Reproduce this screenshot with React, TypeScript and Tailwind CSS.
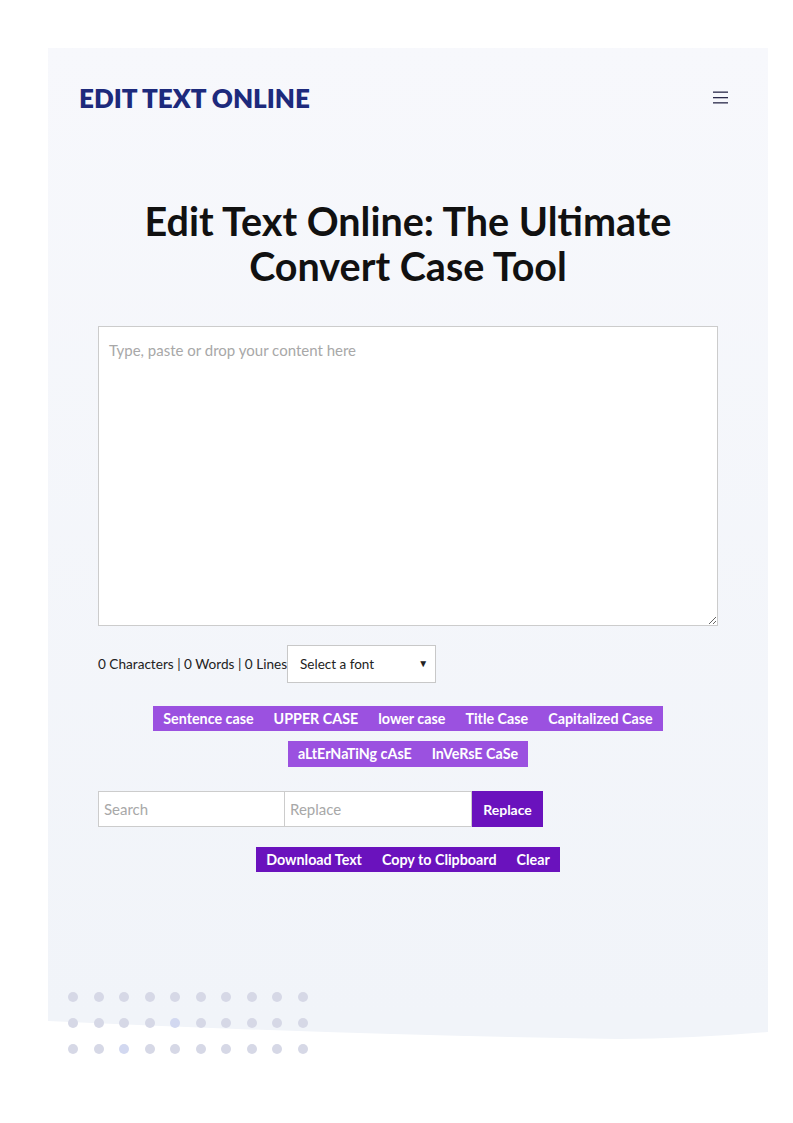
import React from "react";

const font = { fontFamily: "Lato, 'Noto Sans', sans-serif" };

export default function App() {
  const caseRow1 = ["Sentence case", "UPPER CASE", "lower case", "Title Case", "Capitalized Case"];
  const caseRow2 = ["aLtErNaTiNg cAsE", "InVeRsE CaSe"];
  const dots = Array.from({ length: 30 });
  return (
    <div className="relative min-h-[1123px] bg-white pt-[48px]" style={font}>
      <div className="ml-[48px] w-[720px]">
        <div className="bg-gradient-to-b from-[#f7f8fc] to-[#f1f4f9] pb-[149px]">
          <header className="flex h-[100px] items-center justify-between pl-[31px] pr-[40px]">
            <div className="text-[26px] font-extrabold text-[#1d2a7c]">EDIT TEXT ONLINE</div>
            <svg width="15" height="13" viewBox="0 0 15 13" className="mt-[-2px]">
              <rect x="0" y="0.5" width="15" height="1.3" fill="#2a2a4a" />
              <rect x="0" y="6" width="15" height="1.3" fill="#2a2a4a" />
              <rect x="0" y="11.2" width="15" height="1.3" fill="#2a2a4a" />
            </svg>
          </header>
          <h1 className="mt-[50px] text-center text-[39.5px] font-bold leading-[45px] text-[#111]">
            Edit Text Online: The Ultimate
            <br />
            Convert Case Tool
          </h1>
          <div className="mx-[50px] mt-[38px]">
            <textarea
              placeholder="Type, paste or drop your content here"
              className="block h-[300px] w-full resize-y border border-[#cccccc] bg-white px-[10px] py-[12px] text-[15px] text-[#333] placeholder:text-[#a8a8a8] outline-none"
            />
            <div className="mt-[19px] flex items-center">
              <span className="text-[13.6px] text-[#222]">0 Characters | 0 Words | 0 Lines</span>
              <div className="relative flex h-[38px] w-[149px] items-center border border-[#c8c8c8] bg-white pl-[12px] text-[13.5px] text-[#222]">
                Select a font
                <span className="absolute right-[7px] top-[10px] text-[10px]">▼</span>
              </div>
            </div>
            <div className="mt-[23px] flex flex-col items-center gap-[10px]">
              <div className="flex bg-[#9b51e0]">
                {caseRow1.map((t) => (
                  <span key={t} className="px-[10px] text-[14.3px] font-bold leading-[25px] text-white">{t}</span>
                ))}
              </div>
              <div className="flex bg-[#9b51e0]">
                {caseRow2.map((t) => (
                  <span key={t} className="px-[10px] text-[14.3px] font-bold leading-[26px] text-white">{t}</span>
                ))}
              </div>
            </div>
            <div className="mt-[24px] flex">
              <input placeholder="Search" className="h-[36px] w-[187px] border border-[#cccccc] bg-white px-[5px] text-[15px] placeholder:text-[#a8a8a8] outline-none" />
              <input placeholder="Replace" className="h-[36px] w-[187px] border border-l-0 border-[#cccccc] bg-white px-[5px] text-[15px] placeholder:text-[#a8a8a8] outline-none" />
              <button className="h-[36px] w-[71px] bg-[#6a12bd] text-[14px] font-bold text-white">Replace</button>
            </div>
            <div className="mt-[20px] flex justify-center">
              <div className="flex bg-[#6a12bd]">
                {["Download Text", "Copy to Clipboard", "Clear"].map((t) => (
                  <span key={t} className="px-[10px] text-[14.3px] font-bold leading-[25px] text-white">{t}</span>
                ))}
              </div>
            </div>
          </div>
        </div>
        <svg width="720" height="20" viewBox="0 0 720 20" preserveAspectRatio="none" className="block">
          <path d="M0 0 H720 V11 Q640 18 570 18 Q300 14 0 0 Z" fill="#f1f4f9" />
        </svg>
      </div>
      <div className="absolute left-[68px] top-[992px] grid grid-cols-10 gap-x-[15.5px] gap-y-[16px]">
        {dots.map((_, i) => (
          <div key={i} className={`h-[10px] w-[10px] rounded-full ${i === 14 || i === 22 ? "bg-[#d2d8f0]" : "bg-[#d6d8e6]"}`} />
        ))}
      </div>
    </div>
  );
}
